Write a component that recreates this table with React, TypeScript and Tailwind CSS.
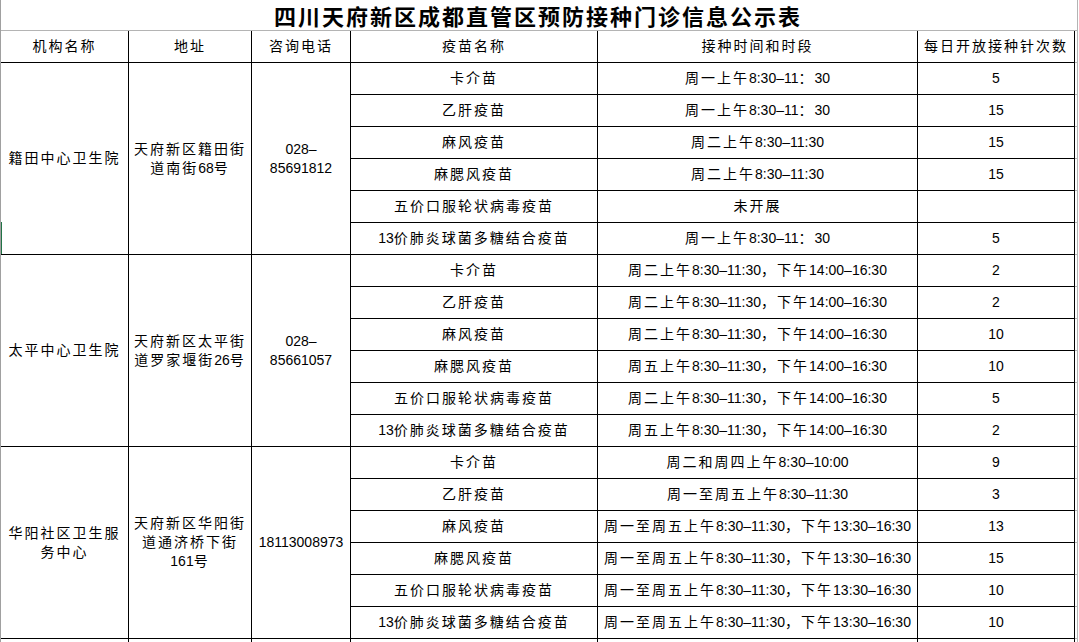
import React from "react";

type Row = { name: string; time: string; count: string };
type Clinic = { org: string; addr: string; phone: React.ReactNode; rows: Row[] };

const clinics: Clinic[] = [
  {
    org: "籍田中心卫生院",
    addr: "天府新区籍田街道南街68号",
    phone: (
      <>
        028–
        <br />
        85691812
      </>
    ),
    rows: [
      { name: "卡介苗", time: "周一上午8:30–11：30", count: "5" },
      { name: "乙肝疫苗", time: "周一上午8:30–11：30", count: "15" },
      { name: "麻风疫苗", time: "周二上午8:30–11:30", count: "15" },
      { name: "麻腮风疫苗", time: "周二上午8:30–11:30", count: "15" },
      { name: "五价口服轮状病毒疫苗", time: "未开展", count: "" },
      { name: "13价肺炎球菌多糖结合疫苗", time: "周一上午8:30–11：30", count: "5" },
    ],
  },
  {
    org: "太平中心卫生院",
    addr: "天府新区太平街道罗家堰街26号",
    phone: (
      <>
        028–
        <br />
        85661057
      </>
    ),
    rows: [
      { name: "卡介苗", time: "周二上午8:30–11:30，下午14:00–16:30", count: "2" },
      { name: "乙肝疫苗", time: "周二上午8:30–11:30，下午14:00–16:30", count: "2" },
      { name: "麻风疫苗", time: "周二上午8:30–11:30，下午14:00–16:30", count: "10" },
      { name: "麻腮风疫苗", time: "周五上午8:30–11:30，下午14:00–16:30", count: "10" },
      { name: "五价口服轮状病毒疫苗", time: "周二上午8:30–11:30，下午14:00–16:30", count: "5" },
      { name: "13价肺炎球菌多糖结合疫苗", time: "周五上午8:30–11:30，下午14:00–16:30", count: "2" },
    ],
  },
  {
    org: "华阳社区卫生服务中心",
    addr: "天府新区华阳街道通济桥下街161号",
    phone: "18113008973",
    rows: [
      { name: "卡介苗", time: "周二和周四上午8:30–10:00", count: "9" },
      { name: "乙肝疫苗", time: "周一至周五上午8:30–11:30", count: "3" },
      { name: "麻风疫苗", time: "周一至周五上午8:30–11:30，下午13:30–16:30", count: "13" },
      { name: "麻腮风疫苗", time: "周一至周五上午8:30–11:30，下午13:30–16:30", count: "15" },
      { name: "五价口服轮状病毒疫苗", time: "周一至周五上午8:30–11:30，下午13:30–16:30", count: "10" },
      { name: "13价肺炎球菌多糖结合疫苗", time: "周一至周五上午8:30–11:30，下午13:30–16:30", count: "10" },
    ],
  },
];

// CJK glyphs get wider spacing than the latin digits, like the sheet renders them
function T({ s }: { s: React.ReactNode }) {
  if (typeof s !== "string") return <>{s}</>;
  const parts = s.split(/([\u3000-\u9fff\uff00-\uffef]+)/);
  return (
    <>
      {parts.map((p, i) =>
        /[\u3000-\u9fff\uff00-\uffef]/.test(p) ? (
          <span key={i} className="tracking-[2px]">
            {p}
          </span>
        ) : (
          p
        )
      )}
    </>
  );
}

const cell = "border-r border-b border-black text-center align-middle p-0";
const edge = "border-r border-b border-[#b4b4b4] p-0";

export default function App() {
  return (
    <div className="relative w-[1079px] h-[642px] overflow-hidden bg-white border-l border-[#a0a0a0] text-black text-[14px] leading-[19px] font-['Liberation_Sans','Noto_Sans_CJK_SC',sans-serif]">
      <div className="absolute left-[-1px] top-[222px] w-[2px] h-[32px] bg-[#217346]" />
      <table className="table-fixed border-separate border-spacing-0 w-[1077px]">
        <colgroup>
          <col className="w-[128px]" />
          <col className="w-[123px]" />
          <col className="w-[99px]" />
          <col className="w-[247px]" />
          <col className="w-[320px]" />
          <col className="w-[157px]" />
          <col className="w-[3px]" />
        </colgroup>
        <tbody>
          <tr className="h-[31px]">
            <td
              colSpan={6}
              className="border-b border-[#b4b4b4] p-0 text-center text-[22px] leading-[30px] font-bold tracking-[2px] font-['Noto_Sans_CJK_SC',sans-serif]"
            >
              四川天府新区成都直管区预防接种门诊信息公示表
            </td>
            <td className={edge} />
          </tr>
          <tr className="h-[32px]">
            {["机构名称", "地址", "咨询电话", "疫苗名称", "接种时间和时段", "每日开放接种针次数"].map((h) => (
              <td key={h} className={cell}>
                <T s={h} />
              </td>
            ))}
            <td className={edge} />
          </tr>
          {clinics.map((c) =>
            c.rows.map((r, i) => (
              <tr key={c.org + i} className="h-[32px]">
                {i === 0 && (
                  <>
                    <td rowSpan={6} className={cell + " px-1"}>
                      <T s={c.org} />
                    </td>
                    <td rowSpan={6} className={cell + " px-1"}>
                      <T s={c.addr} />
                    </td>
                    <td rowSpan={6} className={cell}>
                      <T s={c.phone} />
                    </td>
                  </>
                )}
                <td className={cell + " whitespace-nowrap"}>
                  <T s={r.name} />
                </td>
                <td className={cell + " whitespace-nowrap"}>
                  <T s={r.time} />
                </td>
                <td className={cell}>{r.count}</td>
                <td className={edge} />
              </tr>
            ))
          )}
          <tr className="h-[32px]">
            <td className={cell} />
            <td className={cell} />
            <td className={cell} />
            <td className={cell} />
            <td className={cell} />
            <td className={cell} />
            <td className={edge} />
          </tr>
        </tbody>
      </table>
    </div>
  );
}
